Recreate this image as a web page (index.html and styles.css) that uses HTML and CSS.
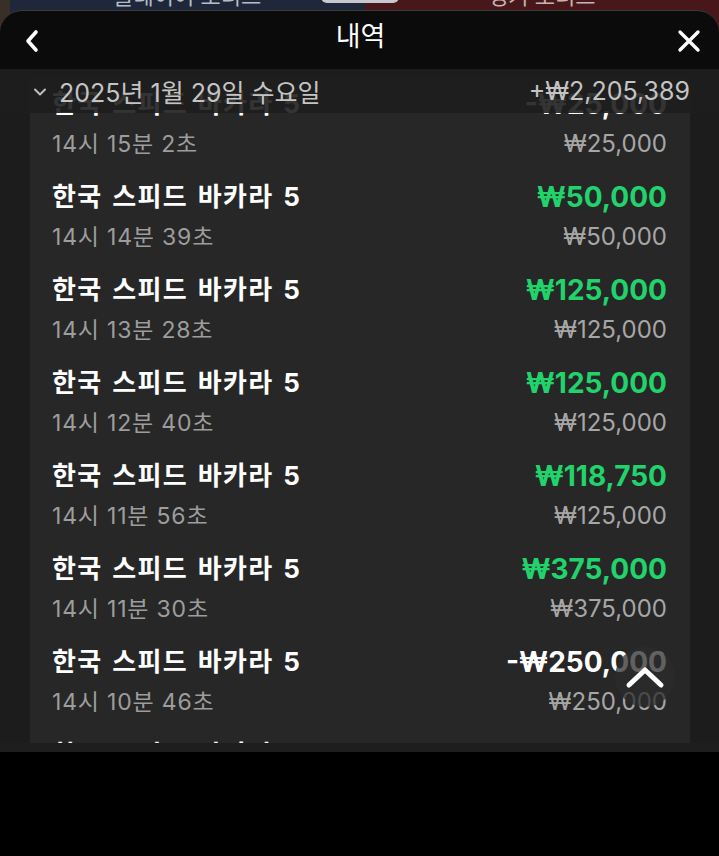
FILE: index.html
```html
<!DOCTYPE html>
<html lang="ko">
<head>
<meta charset="utf-8">
<link rel="stylesheet" href="styles.css">
</head>
<body>
<div class="game">
  <div class="side side-player"><span>플레이어 보너스</span></div>
  <div class="pill"></div>
  <div class="side side-banker"><span>뱅커 보너스</span></div>
</div>
<div class="modal">
  <div class="topbar">
    <button class="icon-btn" aria-label="back">
      <svg width="16" height="24" viewBox="0 0 16 24"><path d="M12 3 L4 12 L12 21" fill="none" stroke="#fff" stroke-width="3.6" stroke-linecap="round" stroke-linejoin="round"/></svg>
    </button>
    <div class="title">내역</div>
    <button class="icon-btn" aria-label="close">
      <svg width="24" height="24" viewBox="0 0 24 24"><path d="M3 3 L21 21 M21 3 L3 21" fill="none" stroke="#fff" stroke-width="3.4" stroke-linecap="round"/></svg>
    </button>
  </div>
  <div class="content">
    <div class="date-head">
      <div class="date-left">
        <svg width="14" height="10" viewBox="0 0 14 10"><path d="M2 2.5 L7 7.5 L12 2.5" fill="none" stroke="#bdbdbd" stroke-width="2" stroke-linecap="round" stroke-linejoin="round"/></svg>
        <span>2025년 1월 29일 수요일</span>
      </div>
      <span class="date-total">+₩2,205,389</span>
    </div>
    <div class="panel">
      <div class="row"><div class="l"><div class="name">한국 스피드 바카라 5</div><div class="time">14시 15분 2초</div></div><div class="r"><div class="amt">-₩25,000</div><div class="bet">₩25,000</div></div></div>
      <div class="row"><div class="l"><div class="name">한국 스피드 바카라 5</div><div class="time">14시 14분 39초</div></div><div class="r"><div class="amt win">₩50,000</div><div class="bet">₩50,000</div></div></div>
      <div class="row"><div class="l"><div class="name">한국 스피드 바카라 5</div><div class="time">14시 13분 28초</div></div><div class="r"><div class="amt win">₩125,000</div><div class="bet">₩125,000</div></div></div>
      <div class="row"><div class="l"><div class="name">한국 스피드 바카라 5</div><div class="time">14시 12분 40초</div></div><div class="r"><div class="amt win">₩125,000</div><div class="bet">₩125,000</div></div></div>
      <div class="row"><div class="l"><div class="name">한국 스피드 바카라 5</div><div class="time">14시 11분 56초</div></div><div class="r"><div class="amt win">₩118,750</div><div class="bet">₩125,000</div></div></div>
      <div class="row"><div class="l"><div class="name">한국 스피드 바카라 5</div><div class="time">14시 11분 30초</div></div><div class="r"><div class="amt win">₩375,000</div><div class="bet">₩375,000</div></div></div>
      <div class="row"><div class="l"><div class="name">한국 스피드 바카라 5</div><div class="time">14시 10분 46초</div></div><div class="r"><div class="amt">-₩250,000</div><div class="bet">₩250,000</div></div></div>
      <div class="row"><div class="l"><div class="name">한국 스피드 바카라 5</div><div class="time">14시 10분 12초</div></div><div class="r"><div class="amt win">₩237,500</div><div class="bet">₩125,000</div></div></div>
    </div>
    <button class="to-top" aria-label="scroll to top">
      <svg width="40" height="26" viewBox="0 0 40 26"><path d="M4 21 L20 6 L36 21" fill="none" stroke="#fff" stroke-width="5" stroke-linecap="round" stroke-linejoin="round"/></svg>
    </button>
  </div>
  <div class="bottom-strip"></div>
</div>
</body>
</html>
```

FILE: styles.css
```css
* { box-sizing: border-box; }
html, body {
  margin: 0;
  padding: 0;
  background: #000;
  width: 719px;
  height: 856px;
  overflow: hidden;
  font-family: "Inter", "Noto Sans CJK KR", "Noto Sans", sans-serif;
}
button {
  background: none;
  border: 0;
  padding: 0;
  cursor: pointer;
}
.game {
  height: 42px;
  display: flex;
  position: relative;
  background: #3a2f28;
  padding-left: 10px;
}
.side {
  flex: 1;
  display: flex;
  justify-content: center;
  align-items: flex-start;
  overflow: hidden;
  color: #b7bcc6;
  font-size: 22px;
  line-height: 22px;
}
.side span { margin-top: -15px; }
.side-player { background: #1e283a; }
.side-banker { background: #47171a; color: #c9b2b2; }
.pill {
  position: absolute;
  left: 321px;
  top: -10px;
  width: 78px;
  height: 13px;
  border-radius: 6px;
  background: #c8c9cf;
}
.modal {
  margin-top: -32px;
  position: relative;
  display: flex;
  flex-direction: column;
}
.topbar {
  height: 59px;
  background: #0b0b0b;
  border-radius: 22px 22px 0 0;
  border-top: 1px solid #3b3b3b;
  display: flex;
  align-items: center;
  justify-content: space-between;
  padding: 0 18px 0 20px;
  color: #fff;
}
.icon-btn {
  width: 24px;
  height: 24px;
  display: flex;
  align-items: center;
  justify-content: center;
  margin-top: 2px;
}
.title {
  font-size: 27px;
  line-height: 30px;
  margin-top: -6px;
}
.content {
  height: 674px;
  background: #1c1c1c;
  overflow: hidden;
  position: relative;
  padding: 0 29px 0 30px;
}
.date-head {
  position: relative;
  z-index: 1;
  height: 44px;
  margin: 0 -29px 0 -30px;
  padding: 0 29px 0 33px;
  display: flex;
  align-items: center;
  justify-content: space-between;
  background: rgba(30, 30, 30, 0.9);
  color: #c4c4c4;
  font-size: 25px;
}
.date-left {
  display: flex;
  align-items: center;
  gap: 12px;
}
.date-left svg { margin-top: 2px; }
.panel {
  margin-top: -36px;
  background: #272727;
  padding: 0 23px 0 22px;
}
.row {
  height: 93px;
  padding-top: 7px;
  display: flex;
  justify-content: space-between;
}
.name {
  font-size: 26px;
  line-height: 40px;
  font-weight: 700;
  color: #fff;
  letter-spacing: 1.4px;
  word-spacing: 2px;
}
.time {
  font-size: 23px;
  line-height: 40px;
  color: #9d9d9d;
  letter-spacing: 0.8px;
}
.r { text-align: right; }
.amt {
  font-size: 28px;
  line-height: 40px;
  font-weight: 700;
  color: #fff;
}
.amt.win { color: #22d36c; }
.bet {
  font-size: 24px;
  line-height: 40px;
  color: #a6a6a6;
}
.to-top {
  position: absolute;
  left: 615px;
  top: 578px;
  width: 60px;
  height: 60px;
  border-radius: 50%;
  background: rgba(44, 44, 44, 0.75);
  display: flex;
  align-items: center;
  justify-content: center;
  z-index: 2;
}
.bottom-strip {
  height: 9px;
  background: #1e1e1e;
}
```
